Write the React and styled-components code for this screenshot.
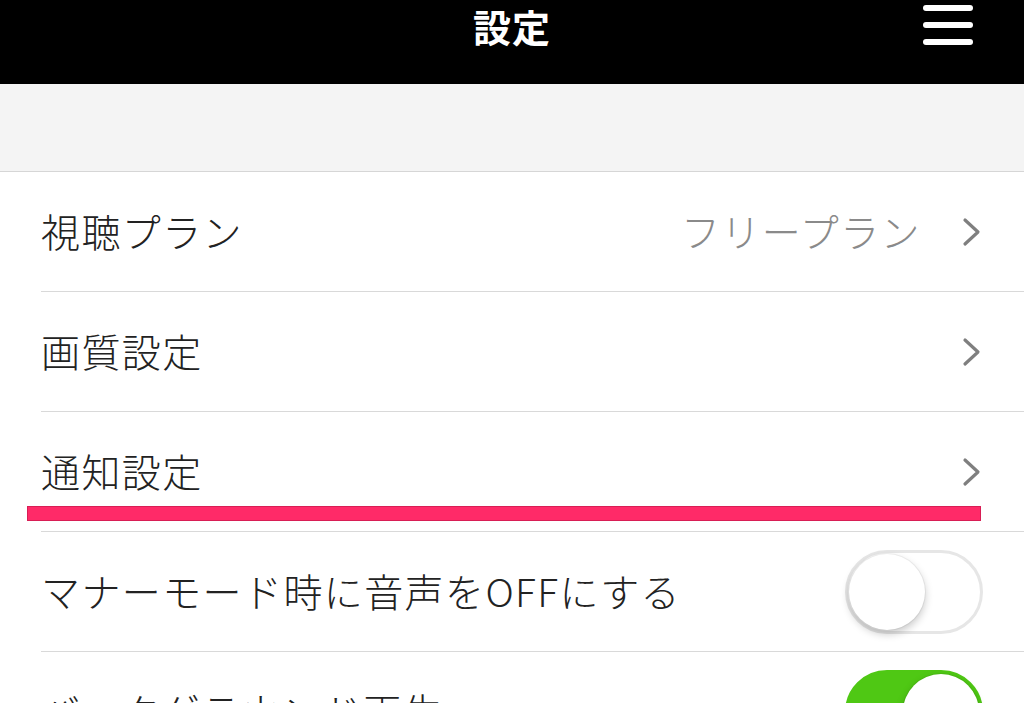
import styled, { createGlobalStyle } from "styled-components";

const GlobalStyle = createGlobalStyle`
  html, body {
    margin: 0;
    padding: 0;
    background: #fff;
    font-family: "Noto Sans CJK JP", "Noto Sans", sans-serif;
  }
`;

const Page = styled.div`
  width: 1024px;
  height: 703px;
  overflow: hidden;
  background: #fff;
`;

const Header = styled.header`
  height: 84px;
  background: #000;
  display: flex;
  justify-content: center;
  position: relative;

  & h1 {
    margin: 0;
    color: #fff;
    font-size: 38px;
    font-weight: 700;
    line-height: 52px;
    letter-spacing: 1px;
  }
`;

const Burger = styled.div`
  position: absolute;
  right: 51px;
  top: 5px;
  display: flex;
  flex-direction: column;
  gap: 11px;

  & span {
    display: block;
    width: 50px;
    height: 6px;
    border-radius: 3px;
    background: #fff;
  }
`;

const Band = styled.div`
  height: 87px;
  background: #f4f4f4;
  border-bottom: 1px solid #d6d6d6;
`;

const Row = styled.div`
  position: relative;
  height: 120px;
  padding-left: 41px;
`;

const RowInner = styled.div`
  height: 119px;
  border-bottom: 1px solid #d9d9d9;
  display: flex;
  align-items: center;
  padding-right: 41px;
  gap: 40px;
`;

const Label = styled.span`
  flex: 1;
  font-size: 39px;
  font-weight: 300;
  color: #222;
  letter-spacing: 1.4px;
  padding-bottom: 4px;
`;

const Value = styled.span`
  font-size: 39px;
  font-weight: 300;
  color: #8a8a8a;
  letter-spacing: 1.4px;
  padding-bottom: 4px;
`;

const Marker = styled.div`
  position: absolute;
  left: 27px;
  width: 954px;
  top: 94px;
  height: 15px;
  background: #ff2a68;
  box-shadow: inset 0 0 0 1px #d81e55;
`;

const Track = styled.div`
  width: 138px;
  height: 84px;
  box-sizing: border-box;
  border-radius: 42px;
  border: 3px solid ${(p) => (p.$on ? "#4fc814" : "#e6e6e6")};
  background: ${(p) => (p.$on ? "#4fc814" : "#fff")};
  display: flex;
  align-items: center;
  justify-content: ${(p) => (p.$on ? "flex-end" : "flex-start")};
  padding: 0 1px;

  & span {
    width: 76px;
    height: 76px;
    border-radius: 50%;
    background: #fff;
    box-shadow: 0 4px 8px rgba(0, 0, 0, 0.22), 0 0 0 1px rgba(0, 0, 0, 0.05);
  }
`;

function Chevron() {
  return (
    <svg width="22" height="30" viewBox="0 0 22 30">
      <polyline
        points="4,3 17,15 4,27"
        fill="none"
        stroke="#7f7f7f"
        strokeWidth="3.2"
        strokeLinecap="round"
        strokeLinejoin="round"
      />
    </svg>
  );
}

export default function App() {
  return (
    <Page>
      <GlobalStyle />
      <Header>
        <h1>設定</h1>
        <Burger>
          <span />
          <span />
          <span />
        </Burger>
      </Header>
      <Band />
      <Row>
        <RowInner>
          <Label>視聴プラン</Label>
          <Value>フリープラン</Value>
          <Chevron />
        </RowInner>
      </Row>
      <Row>
        <RowInner>
          <Label>画質設定</Label>
          <Chevron />
        </RowInner>
      </Row>
      <Row>
        <RowInner>
          <Label>通知設定</Label>
          <Chevron />
        </RowInner>
        <Marker />
      </Row>
      <Row>
        <RowInner>
          <Label>マナーモード時に音声をOFFにする</Label>
          <Track>
            <span />
          </Track>
        </RowInner>
      </Row>
      <Row>
        <RowInner>
          <Label>バックグラウンド再生</Label>
          <Track $on>
            <span />
          </Track>
        </RowInner>
      </Row>
    </Page>
  );
}
